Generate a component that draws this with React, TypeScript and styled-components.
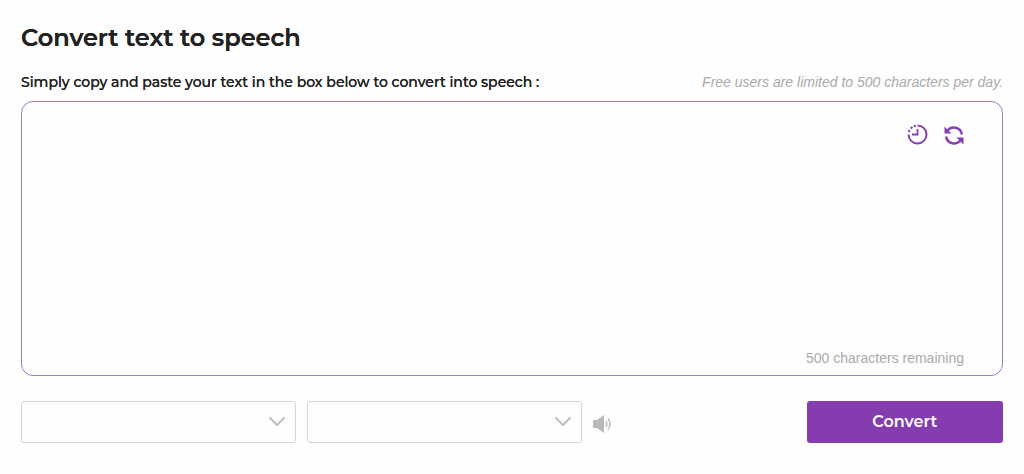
import React, { useState } from "react";
import styled, { createGlobalStyle } from "styled-components";

const LIMIT = 500;

const GlobalStyle = createGlobalStyle`
  *, *::before, *::after { box-sizing: border-box; }
  body {
    margin: 0;
    background: #fefefe;
    color: #222;
    font-family: Montserrat, Inter, sans-serif;
  }
`;

const Page = styled.main`
  padding: 20px 21px 31px;
`;

const Title = styled.h1`
  margin: 0;
  font-size: 24px;
  line-height: 36px;
  font-weight: 600;
  text-shadow: 0 0 0 currentColor;
`;

const LabelRow = styled.div`
  display: flex;
  justify-content: space-between;
  align-items: center;
  gap: 16px;
  margin: 16px 0 9px;
  line-height: 20px;
`;

const FieldLabel = styled.label`
  font-size: 14px;
  font-weight: 500;
  text-shadow: 0 0 0 currentColor;
`;

const Hint = styled.span`
  font-family: "Liberation Sans", Arial, sans-serif;
  font-size: 14px;
  font-style: italic;
  color: #aaa;
`;

const Editor = styled.section`
  display: flex;
  flex-direction: column;
  padding: 22px 38px 7px 16px;
  border: 1px solid #a078bd;
  border-radius: 12px;
`;

const Tools = styled.div`
  display: flex;
  justify-content: flex-end;
  gap: 16px;
`;

const IconButton = styled.button`
  display: flex;
  padding: 0;
  border: 0;
  background: none;
  color: #843fb0;
  cursor: pointer;
`;

const TextInput = styled.textarea`
  height: 202px;
  padding: 0;
  border: 0;
  outline: 0;
  resize: none;
  background: transparent;
  color: inherit;
  font: 14px/20px "Liberation Sans", Arial, sans-serif;
`;

const Remaining = styled.output`
  align-self: flex-end;
  font-family: "Liberation Sans", Arial, sans-serif;
  font-size: 14px;
  line-height: 20px;
  color: #aaa;
`;

const Controls = styled.div`
  display: flex;
  align-items: center;
  gap: 11px;
  margin-top: 25px;
`;

const SelectBox = styled.div`
  display: grid;
  grid-template-columns: 1fr 16px;
  align-items: center;
  width: 28%;
  height: 42px;
  padding-right: 10px;
  border: 1px solid #d4d4d4;
  border-radius: 3px;

  svg {
    grid-area: 1 / 2;
    pointer-events: none;
  }
`;

const Select = styled.select`
  grid-area: 1 / 1 / 2 / 3;
  width: 100%;
  height: 40px;
  padding: 0 28px 0 12px;
  border: 0;
  outline: 0;
  appearance: none;
  background: transparent;
  color: #222;
  font: 14px/20px "Liberation Sans", Arial, sans-serif;
`;

const SpeakerButton = styled(IconButton)`
  padding-top: 4px;
  color: #b9b9b9;
`;

const ConvertButton = styled.button`
  width: 20%;
  height: 42px;
  margin-left: auto;
  padding: 0;
  border: 0;
  border-radius: 3px;
  background: #843cae;
  color: #fff;
  font: 600 16px/24px Montserrat, Inter, sans-serif;
  cursor: pointer;
`;

const HistoryIcon = () => (
  <svg width="22" height="22" viewBox="0 0 22 22" fill="none" stroke="currentColor" strokeWidth="2" aria-hidden="true">
    <path d="M11.500 1.500a9 9 0 1 1-9 9" />
    <path d="M2.800 8.200l.8-2M4.700 4.600l1.700-1.500M7.800 2.300l2-.6" />
    <path d="M11.500 5V10.500H6" strokeWidth="1.800" />
  </svg>
);

const RefreshIcon = () => (
  <svg width="20" height="22" viewBox="0 0 20 22" fill="none" stroke="currentColor" strokeWidth="2.400" aria-hidden="true">
    <path d="M3.200 7.300A8 8 0 0 1 17.900 10.500" />
    <path d="M16.800 15.700A8 8 0 0 1 2.100 12.500" />
    <path d="M.5 2.500v7H7.500zM19.500 20.500v-7H12.500z" fill="currentColor" stroke="none" />
  </svg>
);

const ChevronIcon = () => (
  <svg width="16" height="10" viewBox="0 0 16 10" fill="none" stroke="#bcbcbc" strokeWidth="1.800" strokeLinecap="round" strokeLinejoin="round" aria-hidden="true">
    <path d="M1 1l7 7 7-7" />
  </svg>
);

const SpeakerIcon = () => (
  <svg width="20" height="20" viewBox="0 0 20 20" fill="none" stroke="currentColor" aria-hidden="true">
    <path d="M0 6h4l7-5v18l-7-5H0z" fill="currentColor" stroke="none" />
    <path d="M13 7q2 3 0 6M15 4.500q4 5.500 0 11" strokeWidth="1.300" />
  </svg>
);

function VoiceSelect({ label }: { label: string }) {
  return (
    <SelectBox>
      <Select aria-label={label} defaultValue="">
        <option value="" />
      </Select>
      <ChevronIcon />
    </SelectBox>
  );
}

export default function App() {
  const [text, setText] = useState("");

  return (
    <>
      <GlobalStyle />
      <Page>
        <Title>Convert text to speech</Title>
        <LabelRow>
          <FieldLabel htmlFor="speech-text">
            Simply copy and paste your text in the box below to convert into speech :
          </FieldLabel>
          <Hint>Free users are limited to 500 characters per day.</Hint>
        </LabelRow>
        <Editor>
          <Tools>
            <IconButton type="button" aria-label="History"><HistoryIcon /></IconButton>
            <IconButton type="button" aria-label="Reset" onClick={() => setText("")}><RefreshIcon /></IconButton>
          </Tools>
          <TextInput
            id="speech-text"
            maxLength={LIMIT}
            value={text}
            onChange={(event) => setText(event.target.value)}
          />
          <Remaining htmlFor="speech-text">{`${LIMIT - text.length} characters remaining`}</Remaining>
        </Editor>
        <Controls>
          <VoiceSelect label="Language" />
          <VoiceSelect label="Voice" />
          <SpeakerButton type="button" aria-label="Preview voice"><SpeakerIcon /></SpeakerButton>
          <ConvertButton type="button">Convert</ConvertButton>
        </Controls>
      </Page>
    </>
  );
}
